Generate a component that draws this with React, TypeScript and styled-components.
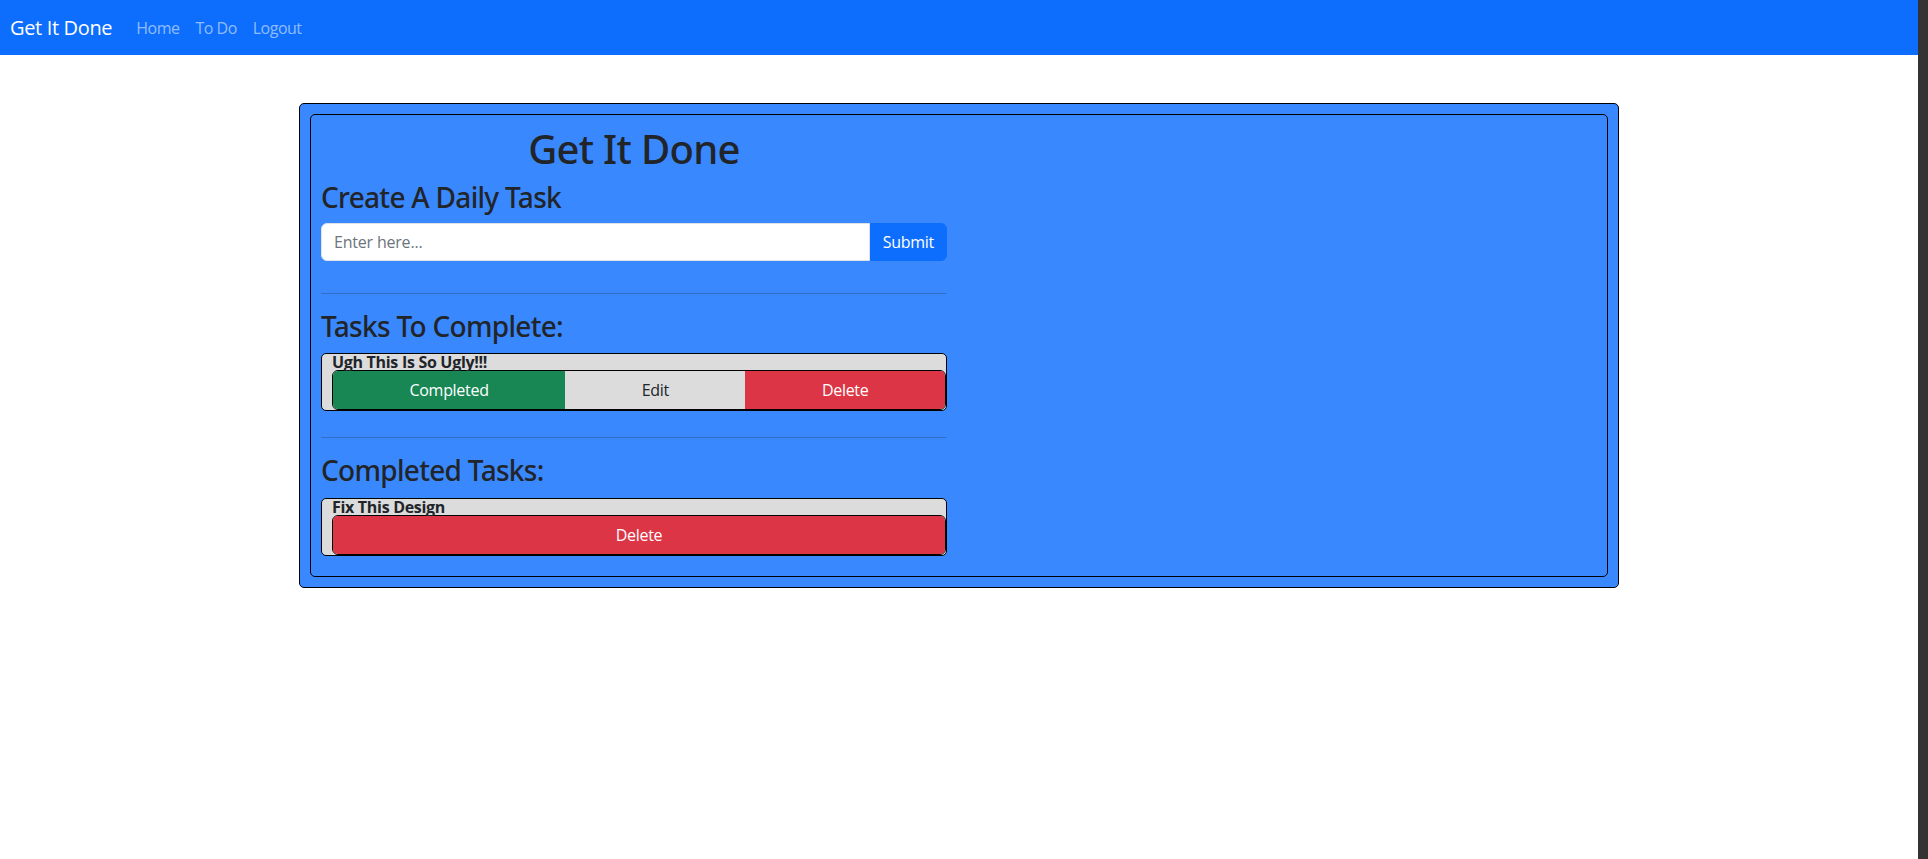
import React from "react";
import styled, { createGlobalStyle } from "styled-components";

const GlobalStyle = createGlobalStyle`
  html, body {
    margin: 0;
    padding: 0;
    height: 100%;
    background: #ffffff;
  }
  body {
    font-family: "Open Sans", "Noto Sans", "Liberation Sans", sans-serif;
    font-size: 16px;
    line-height: 1.5;
    color: #212529;
  }
  * { box-sizing: border-box; }
`;

const Shell = styled.div`
  display: flex;
  height: 100vh;
  overflow: hidden;
`;

const Page = styled.div`
  flex: 1;
  min-width: 0;
  background: #ffffff;
`;

const ScrollStrip = styled.div`
  width: 10px;
  flex: 0 0 10px;
  background: #333333;
`;

const NavBar = styled.nav`
  height: 55px;
  background: #0d6efd;
  display: flex;
  align-items: center;
  padding: 0 10px;
`;

const Brand = styled.a`
  font-size: 20px;
  line-height: 30px;
  letter-spacing: -0.35px;
  color: #ffffff;
  margin-right: 16px;
  text-decoration: none;
`;

const NavLink = styled.a`
  font-size: 16px;
  line-height: 24px;
  letter-spacing: -0.5px;
  padding: 0 8px;
  color: rgba(255, 255, 255, 0.55);
  text-decoration: none;
`;

const Container = styled.div`
  width: 1320px;
  margin: 48px auto 0;
`;

const OuterCard = styled.div`
  background: #3a88fe;
  border: 1px solid #000000;
  border-radius: 5px;
  padding: 10px;
`;

const InnerBox = styled.div`
  border: 1px solid #000000;
  border-radius: 5px;
  padding: 10px;
  display: grid;
  grid-template-columns: 1fr 1fr;
  column-gap: 24px;
`;

const Column = styled.div`
  min-width: 0;
`;

const Title = styled.h1`
  margin: 0 0 8px;
  font-family: "Noto Sans", "Open Sans", sans-serif;
  font-size: 40px;
  line-height: 48px;
  font-weight: 500;
  letter-spacing: -0.7px;
  text-align: center;
  color: #212529;
`;

const Heading = styled.h3`
  margin: 0 0 8px;
  font-family: "Noto Sans", "Open Sans", sans-serif;
  font-size: 28px;
  line-height: 33.6px;
  font-weight: 500;
  letter-spacing: -0.7px;
  color: #212529;
`;

const InputGroup = styled.form`
  display: flex;
  height: 38px;
  margin: 0 0 32px;
`;

const TextInput = styled.input`
  flex: 1;
  min-width: 0;
  border: 1px solid #dee2e6;
  border-radius: 6px 0 0 6px;
  padding: 6px 12px;
  font-family: inherit;
  font-size: 16px;
  line-height: 24px;
  letter-spacing: -0.2px;
  color: #212529;
  background: #ffffff;
  outline: none;
  &::placeholder {
    color: #6c757d;
  }
`;

const SubmitButton = styled.button`
  border: 1px solid #0d6efd;
  background: #0d6efd;
  color: #ffffff;
  border-radius: 0 6px 6px 0;
  padding: 6px 12px;
  font-family: inherit;
  font-size: 16px;
  line-height: 24px;
  letter-spacing: -0.3px;
`;

const Divider = styled.hr`
  margin: 16px 0;
  border: 0;
  border-top: 1px solid rgba(33, 37, 41, 0.25);
`;

const TaskList = styled.div`
  padding: 2px 0 10px;
`;

const TaskCard = styled.div`
  background: #dcdcdc;
  border: 1px solid #000000;
  border-radius: 5px;
  padding: 0 0 0 10px;
`;

const TaskName = styled.div`
  font-size: 16px;
  font-weight: 700;
  line-height: 16px;
  letter-spacing: -0.3px;
  color: #212529;
`;

const ButtonGroup = styled.div`
  display: flex;
  border: 1px solid #000000;
  border-radius: 6px;
  overflow: hidden;
`;

type Variant = "success" | "plain" | "danger";

const variantBg: Record<Variant, string> = {
  success: "#198754",
  plain: "#dcdcdc",
  danger: "#dc3545",
};

const ActionButton = styled.button<{ $variant: Variant }>`
  flex: 1 1 auto;
  height: 38px;
  border: 0;
  padding: 6px 12px;
  font-family: inherit;
  font-size: 16px;
  line-height: 24px;
  letter-spacing: -0.3px;
  background: ${(p) => variantBg[p.$variant]};
  color: ${(p) => (p.$variant === "plain" ? "#212529" : "#ffffff")};
`;

export default function App() {
  return (
    <>
      <GlobalStyle />
      <Shell>
        <Page>
          <NavBar>
            <Brand href="#">Get It Done</Brand>
            <NavLink href="#">Home</NavLink>
            <NavLink href="#">To Do</NavLink>
            <NavLink href="#">Logout</NavLink>
          </NavBar>
          <Container>
            <OuterCard>
              <InnerBox>
                <Column>
                  <Title>Get It Done</Title>
                  <Heading>Create A Daily Task</Heading>
                  <InputGroup onSubmit={(e) => e.preventDefault()}>
                    <TextInput placeholder="Enter here..." />
                    <SubmitButton type="submit">Submit</SubmitButton>
                  </InputGroup>
                  <Divider />
                  <Heading>Tasks To Complete:</Heading>
                  <TaskList>
                    <TaskCard>
                      <TaskName>Ugh This Is So Ugly!!!</TaskName>
                      <ButtonGroup>
                        <ActionButton $variant="success">Completed</ActionButton>
                        <ActionButton $variant="plain">Edit</ActionButton>
                        <ActionButton $variant="danger">Delete</ActionButton>
                      </ButtonGroup>
                    </TaskCard>
                  </TaskList>
                  <Divider />
                  <Heading>Completed Tasks:</Heading>
                  <TaskList>
                    <TaskCard>
                      <TaskName>Fix This Design</TaskName>
                      <ButtonGroup>
                        <ActionButton $variant="danger">Delete</ActionButton>
                      </ButtonGroup>
                    </TaskCard>
                  </TaskList>
                </Column>
                <Column />
              </InnerBox>
            </OuterCard>
          </Container>
        </Page>
        <ScrollStrip />
      </Shell>
    </>
  );
}
